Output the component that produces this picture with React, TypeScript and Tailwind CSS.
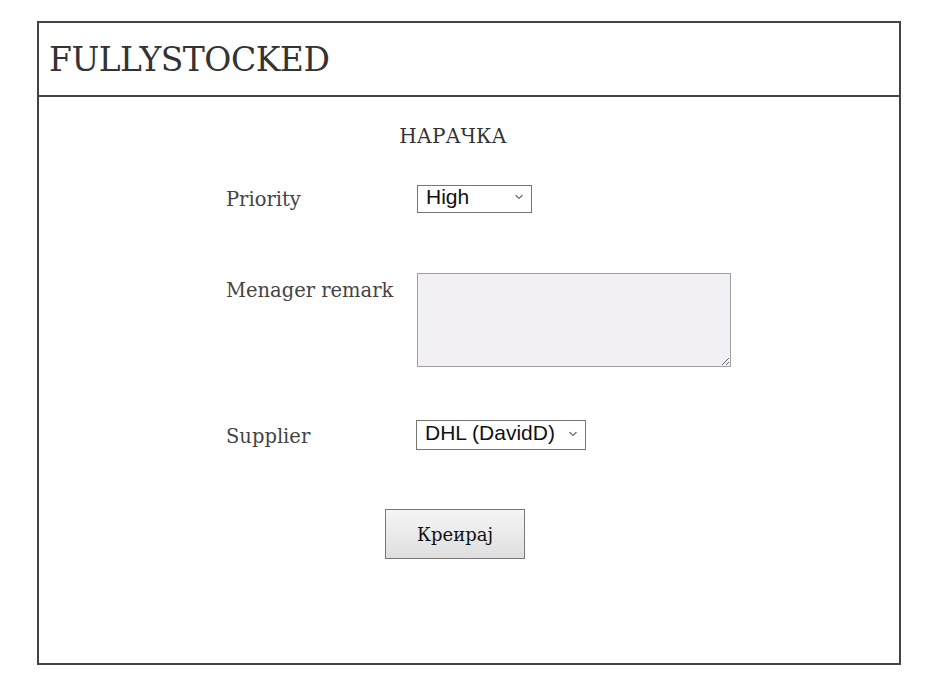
import React from 'react';

const Chevron: React.FC = () => (
  <svg width="8" height="5" viewBox="0 0 8 5" className="absolute right-[9px] top-1/2 -translate-y-1/2 pointer-events-none">
    <path d="M0.5 0.5 L4 4 L7.5 0.5" fill="none" stroke="#666" strokeWidth="1.1" />
  </svg>
);

export default function App() {
  return (
    <div className="min-h-[698px] bg-white pt-[21px] pl-[37px]" style={{ fontFamily: '"DejaVu Serif", "Liberation Serif", serif' }}>
      <div className="w-[864px] h-[644px] border-2 border-[#444] flex flex-col">
        <header className="h-[74px] border-b-2 border-[#444] flex items-center pl-[10px]">
          <h1 className="text-[33px] text-[#333] tracking-[-0.5px] leading-none">FULLYSTOCKED</h1>
        </header>

        <main className="flex-1 pt-[27px]">
          <h2 className="text-center text-[20px] leading-[24px] text-[#333] pr-[32px]">НАРАЧКА</h2>

          <div className="pl-[187px] mt-[35px] text-[19.5px] text-[#444]">
            <div className="flex items-center h-[28px]">
              <label className="w-[191px] pt-[6px]">Priority</label>
              <div className="relative w-[115px] h-[28px]">
                <select
                  defaultValue="High"
                  className="appearance-none w-full h-full border border-[#767676] bg-white pl-[8px] pb-[3px] leading-[22px] text-[21px] text-[#111] outline-none"
                  style={{ fontFamily: '"Liberation Sans", Arial, sans-serif' }}
                >
                  <option>High</option>
                  <option>Medium</option>
                  <option>Low</option>
                </select>
                <Chevron />
              </div>
            </div>

            <div className="flex items-start mt-[62px]">
              <label className="w-[191px] pt-[3px]">Menager remark</label>
              <textarea className="w-[314px] h-[94px] border border-[#a0a0a0] bg-[#f3f0f5] outline-none" />
            </div>

            <div className="flex items-center h-[30px] mt-[52px]">
              <label className="w-[190px] pt-[6px]">Supplier</label>
              <div className="relative w-[170px] h-[30px]">
                <select
                  defaultValue="DHL (DavidD)"
                  className="appearance-none w-full h-full border border-[#767676] bg-white pl-[8px] pb-[3px] leading-[22px] text-[21px] text-[#111] outline-none"
                  style={{ fontFamily: '"Liberation Sans", Arial, sans-serif' }}
                >
                  <option>DHL (DavidD)</option>
                </select>
                <Chevron />
              </div>
            </div>
          </div>

          <div className="pl-[346px] mt-[60px]">
            <button className="w-[140px] h-[50px] border border-[#777] bg-gradient-to-b from-[#f6f6f6] to-[#dedede] text-[18px] text-[#111]">
              Креирај
            </button>
          </div>
        </main>
      </div>
    </div>
  );
}
